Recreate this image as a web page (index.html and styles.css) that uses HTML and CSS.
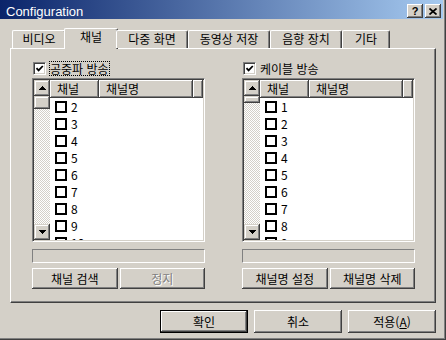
FILE: index.html
```html
<!DOCTYPE html>
<html lang="ko">
<head>
  <meta charset="UTF-8" />
  <title>Configuration</title>
  <link rel="stylesheet" href="styles.css">
</head>
<body>
  <div class="window">
    <div class="titlebar">
      <span class="title">Configuration</span>
      <div class="caption">
        <span class="cap-btn help">?</span>
        <span class="cap-btn">
          <svg width="8" height="7" viewBox="0 0 8 7"><path d="M0.5 0.5L7.5 6.5M7.5 0.5L0.5 6.5" stroke="#000" stroke-width="1.7"/></svg>
        </span>
      </div>
    </div>

    <div class="tabs">
      <div class="tab w-video">비디오</div>
      <div class="tab w-chan active">채널</div>
      <div class="tab w-multi">다중 화면</div>
      <div class="tab w-rec">동영상 저장</div>
      <div class="tab w-audio">음향 장치</div>
      <div class="tab w-etc">기타</div>
    </div>

    <div class="panel">
      <div class="group">
        <div class="check-row">
          <span class="chk"><svg width="9" height="9" viewBox="0 0 9 9"><path d="M1.5 4.2L3.6 6.4L7.8 2" fill="none" stroke="#000" stroke-width="1.8"/></svg></span>
          <span class="label focus">공중파 방송</span>
        </div>
        <div class="listbox">
          <div class="vscroll">
            <span class="sb-btn"><svg width="7" height="4"><rect x="3" y="0" width="1" height="1"/><rect x="2" y="1" width="3" height="1"/><rect x="1" y="2" width="5" height="1"/><rect x="0" y="3" width="7" height="1"/></svg></span>
            <span class="thumb"></span>
            <span class="sb-btn down"><svg width="7" height="4"><rect x="0" y="0" width="7" height="1"/><rect x="1" y="1" width="5" height="1"/><rect x="2" y="2" width="3" height="1"/><rect x="3" y="3" width="1" height="1"/></svg></span>
          </div>
          <div class="listview">
            <div class="lv-head">
              <span class="col c1">채널</span>
              <span class="col c2">채널명</span>
              <span class="col c3"></span>
            </div>
            <div class="rows">
              <div class="row"><span class="box"></span>2</div>
              <div class="row"><span class="box"></span>3</div>
              <div class="row"><span class="box"></span>4</div>
              <div class="row"><span class="box"></span>5</div>
              <div class="row"><span class="box"></span>6</div>
              <div class="row"><span class="box"></span>7</div>
              <div class="row"><span class="box"></span>8</div>
              <div class="row"><span class="box"></span>9</div>
              <div class="row"><span class="box"></span>10</div>
            </div>
          </div>
        </div>
        <div class="progress"></div>
        <div class="btns">
          <button>채널 검색</button>
          <button disabled>정지</button>
        </div>
      </div>

      <div class="group">
        <div class="check-row">
          <span class="chk"><svg width="9" height="9" viewBox="0 0 9 9"><path d="M1.5 4.2L3.6 6.4L7.8 2" fill="none" stroke="#000" stroke-width="1.8"/></svg></span>
          <span class="label">케이블 방송</span>
        </div>
        <div class="listbox">
          <div class="vscroll">
            <span class="sb-btn"><svg width="7" height="4"><rect x="3" y="0" width="1" height="1"/><rect x="2" y="1" width="3" height="1"/><rect x="1" y="2" width="5" height="1"/><rect x="0" y="3" width="7" height="1"/></svg></span>
            <span class="thumb small"></span>
            <span class="sb-btn down"><svg width="7" height="4"><rect x="0" y="0" width="7" height="1"/><rect x="1" y="1" width="5" height="1"/><rect x="2" y="2" width="3" height="1"/><rect x="3" y="3" width="1" height="1"/></svg></span>
          </div>
          <div class="listview">
            <div class="lv-head">
              <span class="col c1">채널</span>
              <span class="col c2">채널명</span>
              <span class="col c3"></span>
            </div>
            <div class="rows">
              <div class="row"><span class="box"></span>1</div>
              <div class="row"><span class="box"></span>2</div>
              <div class="row"><span class="box"></span>3</div>
              <div class="row"><span class="box"></span>4</div>
              <div class="row"><span class="box"></span>5</div>
              <div class="row"><span class="box"></span>6</div>
              <div class="row"><span class="box"></span>7</div>
              <div class="row"><span class="box"></span>8</div>
              <div class="row"><span class="box"></span>9</div>
            </div>
          </div>
        </div>
        <div class="progress"></div>
        <div class="btns">
          <button>채널명 설정</button>
          <button>채널명 삭제</button>
        </div>
      </div>
    </div>

    <div class="footer">
      <button class="default">확인</button>
      <button>취소</button>
      <button>적용(<u>A</u>)</button>
    </div>
  </div>
</body>
</html>
```

FILE: styles.css
```css
body {
  margin: 0;
  background: #d4d0c8;
  color: #000;
  font-family: "Noto Sans CJK KR", sans-serif;
  font-size: 12px;
}

.window {
  width: 446px;
  height: 340px;
  box-sizing: border-box;
  overflow: hidden;
  box-shadow: inset -1px -1px #404040, inset -2px -2px #808080;
}

/* title bar */
.titlebar {
  height: 19px;
  margin-right: 3px;
  display: flex;
  justify-content: space-between;
  align-items: flex-start;
  background: linear-gradient(to right, #0a246a, #a6caf0);
  color: #fff;
}

.title {
  font-family: "Liberation Sans", sans-serif;
  font-size: 13px;
  line-height: 15px;
  padding: 4px 0 0 6px;
}

.caption {
  display: flex;
  gap: 2px;
  margin-top: 4px;
  padding-right: 2px;
}

.cap-btn {
  width: 16px;
  height: 14px;
  box-sizing: border-box;
  display: flex;
  align-items: center;
  justify-content: center;
  background: #d4d0c8;
  color: #000;
  box-shadow: inset -1px -1px #404040, inset 1px 1px #fff, inset -2px -2px #808080;
}

.help {
  font-family: "Liberation Sans", sans-serif;
  font-weight: bold;
  font-size: 11px;
  line-height: 12px;
}

/* tabs */
.tabs {
  position: relative;
  z-index: 2;
  display: flex;
  align-items: flex-start;
  height: 18px;
  margin-top: 11px;
  padding-left: 12px;
}

.tab {
  height: 18px;
  box-sizing: border-box;
  line-height: 16px;
  text-align: center;
  background: #d4d0c8;
  border-top: 1px solid #fff;
  border-left: 1px solid #fff;
  border-right: 1px solid #404040;
  border-radius: 2px 2px 0 0;
  box-shadow: inset -1px 0 #808080;
}

.tab.active {
  height: 21px;
  margin: -2px -2px 0;
}

.w-video { width: 54px; }
.w-chan { width: 50px; }
.w-chan.active { width: 54px; }
.w-multi { width: 72px; }
.w-rec { width: 82px; }
.w-audio { width: 72px; }
.w-etc { width: 48px; }

/* tab page */
.panel {
  position: relative;
  width: 426px;
  height: 255px;
  margin-left: 10px;
  box-sizing: border-box;
  border-top: 1px solid #fff;
  border-left: 1px solid #fff;
  border-right: 1px solid #404040;
  border-bottom: 1px solid #404040;
  box-shadow: inset -1px -1px #808080;
  padding: 12px 0 0 21px;
  display: grid;
  grid-template-columns: 173px 173px;
  column-gap: 37px;
  align-content: start;
}

.group {
  display: flex;
  flex-direction: column;
}

.check-row {
  display: flex;
  align-items: center;
  height: 15px;
}

.chk {
  width: 13px;
  height: 13px;
  margin-left: 1px;
  box-sizing: border-box;
  display: flex;
  align-items: center;
  justify-content: center;
  background: #fff;
  border: 1px solid;
  border-color: #808080 #fff #fff #808080;
  box-shadow: inset 1px 1px #404040, inset -1px -1px #d4d0c8;
}

.label {
  margin-left: 3px;
  line-height: 13px;
  border: 1px dotted transparent;
}

.label.focus {
  border-color: #000;
}

/* list view */
.listbox {
  height: 164px;
  margin-top: 2px;
  box-sizing: border-box;
  display: flex;
  overflow: hidden;
  background: #fff;
  border: 1px solid;
  border-color: #808080 #fff #fff #808080;
  box-shadow: inset 1px 1px #404040, inset -1px -1px #d4d0c8;
  padding: 1px;
}

.vscroll {
  width: 16px;
  flex: none;
  display: flex;
  flex-direction: column;
  background-image: repeating-conic-gradient(#fff 0 25%, #d4d0c8 0 50%);
  background-size: 2px 2px;
}

.sb-btn,
.thumb {
  display: flex;
  align-items: center;
  justify-content: center;
  background: #d4d0c8;
  box-shadow: inset -1px -1px #404040, inset 1px 1px #d4d0c8, inset -2px -2px #808080, inset 2px 2px #fff;
}

.sb-btn { height: 16px; }
.sb-btn.down { margin-top: auto; }
.thumb { height: 13px; }
.thumb.small { height: 7px; }

.listview {
  flex: 1;
  display: flex;
  flex-direction: column;
  overflow: hidden;
}

.lv-head {
  display: flex;
  height: 18px;
  flex: none;
  background: #d4d0c8;
}

.col {
  box-sizing: border-box;
  height: 18px;
  line-height: 17px;
  padding-left: 7px;
  box-shadow: inset -1px -1px #404040, inset 1px 1px #fff, inset -2px -2px #808080;
}

.c1 { width: 49px; }
.c2 { width: 94px; }
.c3 { flex: 1; }

.row {
  height: 17px;
  display: flex;
  align-items: center;
  gap: 4px;
  padding-left: 5px;
  line-height: 17px;
}

.box {
  width: 12px;
  height: 12px;
  box-sizing: border-box;
  border: 2px solid #000;
}

.progress {
  height: 14px;
  margin-top: 7px;
  box-sizing: border-box;
  border: 1px solid;
  border-color: #808080 #fff #fff #808080;
}

/* buttons */
button {
  font: inherit;
  color: #000;
  height: 21px;
  padding: 0;
  border: 0;
  background: #d4d0c8;
  box-shadow: inset -1px -1px #404040, inset 1px 1px #fff, inset -2px -2px #808080;
}

button:disabled {
  color: #808080;
  text-shadow: 1px 1px #fff;
}

.btns {
  display: grid;
  grid-template-columns: 1fr 1fr;
  gap: 2px;
  margin-top: 5px;
}

.footer {
  display: flex;
  justify-content: flex-end;
  gap: 6px;
  margin-top: 7px;
  padding-right: 10px;
}

.footer button {
  width: 88px;
  height: 23px;
}

.footer .default {
  border: 1px solid #000;
}
```
